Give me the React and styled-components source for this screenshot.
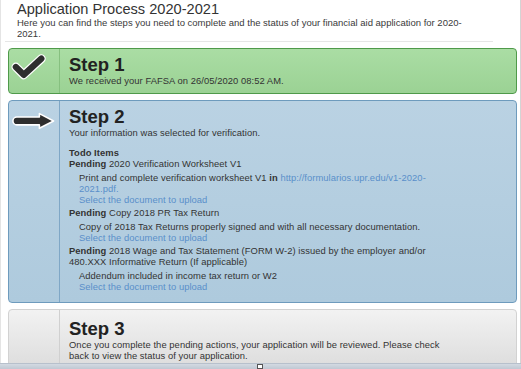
import React from "react";
import styled, { createGlobalStyle, css } from "styled-components";

const GlobalStyle = createGlobalStyle`
  html, body { margin: 0; padding: 0; background: #ffffff; }
  body {
    font-family: "Liberation Sans", Arial, sans-serif;
    color: #333333;
    overflow: hidden;
  }
`;

const Page = styled.div`
  height: 369px;
  box-sizing: border-box;
  padding: 0 3px 0 7px;
  border-left: 1px solid #e4e4e4;
  border-right: 1px solid #d4d4d4;
  overflow: hidden;
`;

const Header = styled.header`
  padding: 1px 50px 0 9px;
`;

const Title = styled.h1`
  margin: 0;
  font-size: 14.6px;
  font-weight: normal;
  line-height: 16px;
  color: #333;
`;

const Lead = styled.p`
  margin: 0;
  font-size: 9.5px;
  line-height: 11px;
  color: #3a3a3a;
`;

const Rule = styled.hr`
  border: 0;
  border-top: 1px solid #e6e6e6;
  margin: 2px 24px 6px -3px;
`;

const Steps = styled.div`
  display: flex;
  flex-direction: column;
  gap: 6px;
`;

const variants = {
  done: css`
    background: linear-gradient(#aadda4, #9bd294);
    border-color: #4f9a4a;
    --divider: #86c07f;
  `,
  active: css`
    background: linear-gradient(#bad2e3, #aecadd);
    border-color: #6e9bbd;
    --divider: #7fa7c6;
  `,
  pending: css`
    background: linear-gradient(#f2f2f2, #dadada);
    border-color: #d2d2d2;
    --divider: #d0d0d0;
  `,
};

const Panel = styled.section`
  display: grid;
  grid-template-columns: 51px 1fr;
  border: 1px solid;
  border-radius: 4px;
  ${(p) => variants[p.$variant]}
`;

const IconCell = styled.div`
  border-right: 1px solid var(--divider);
  display: flex;
  align-items: flex-start;
`;

const Body = styled.div`
  padding: ${(p) => p.$pad};
  font-size: 9.4px;
  letter-spacing: 0.06px;
  line-height: 11px;
  color: #333;
`;

const StepTitle = styled.h2`
  margin: 0;
  font-size: 18.5px;
  font-weight: bold;
  line-height: 21px;
  letter-spacing: 0;
  color: #222;
`;

const SectionLabel = styled.div`
  font-weight: bold;
  margin-top: 9px;
`;

const Req = styled.div`
  margin-top: ${(p) => p.$mt || 0}px;
`;

const Bold = styled.b`
  font-weight: bold;
`;

const Detail = styled.div`
  padding-left: 10px;
  margin-top: 3px;
`;

const Link = styled.a`
  color: #5a8fca;
  text-decoration: none;
`;

const BottomBar = styled.div`
  position: fixed;
  left: 0;
  right: 0;
  bottom: 0;
  height: 5px;
  background: linear-gradient(#d3dae2, #bfc8d3);
  border-top: 1px solid #b7c0cc;
`;

const Handle = styled.span`
  position: absolute;
  left: 257px;
  top: 0;
  width: 4px;
  height: 3px;
  border: 1px solid #555;
  background: #fff;
`;

const CheckIcon = () => (
  <svg width="51" height="36" viewBox="0 0 51 36">
    <path
      d="M7 18 L15 26 L33 9.5"
      fill="none"
      stroke="#ffffff"
      strokeWidth="9"
      strokeLinecap="round"
      strokeLinejoin="round"
    />
    <path
      d="M7 18 L15 26 L33 9.5"
      fill="none"
      stroke="#2e2e2e"
      strokeWidth="6.4"
      strokeLinecap="round"
      strokeLinejoin="round"
    />
  </svg>
);

const ArrowIcon = () => (
  <svg width="51" height="36" viewBox="0 0 51 36">
    <path
      d="M8 16 L31 16 L31 12.5 L45.5 20 L31 27.5 L31 24 L8 24 A4 4 0 0 1 8 16 Z"
      fill="#2e2e2e"
      stroke="#ffffff"
      strokeWidth="1.6"
      strokeLinejoin="round"
    />
  </svg>
);

export default function App() {
  return (
    <>
      <GlobalStyle />
      <Page>
        <Header>
          <Title>Application Process 2020-2021</Title>
          <Lead>
            Here you can find the steps you need to complete and the status of your
            financial aid application for 2020-
            <br />
            2021.
          </Lead>
        </Header>
        <Rule />
        <Steps>
          <Panel $variant="done">
            <IconCell>
              <CheckIcon />
            </IconCell>
            <Body $pad="5px 67px 7px 9px">
              <StepTitle>Step 1</StepTitle>
              <div>We received your FAFSA on 26/05/2020 08:52 AM.</div>
            </Body>
          </Panel>

          <Panel $variant="active">
            <IconCell>
              <ArrowIcon />
            </IconCell>
            <Body $pad="5px 67px 10px 9px">
              <StepTitle>Step 2</StepTitle>
              <div>Your information was selected for verification.</div>
              <SectionLabel>Todo Items</SectionLabel>
              <Req>
                <Bold>Pending</Bold> 2020 Verification Worksheet V1
              </Req>
              <Detail>
                Print and complete verification worksheet V1 <Bold>in</Bold>{" "}
                <Link href="#">
                  http://formularios.upr.edu/v1-2020-
                  <br />
                  2021.pdf.
                </Link>
                <br />
                <Link href="#">Select the document to upload</Link>
              </Detail>
              <Req $mt={2}>
                <Bold>Pending</Bold> Copy 2018 PR Tax Return
              </Req>
              <Detail>
                Copy of 2018 Tax Returns properly signed and with all necessary
                documentation.
                <br />
                <Link href="#">Select the document to upload</Link>
              </Detail>
              <Req $mt={2}>
                <Bold>Pending</Bold> 2018 Wage and Tax Statement (FORM W-2) issued by
                the employer and/or
                <br />
                480.XXX Informative Return (If applicable)
              </Req>
              <Detail>
                Addendum included in income tax return or W2
                <br />
                <Link href="#">Select the document to upload</Link>
              </Detail>
            </Body>
          </Panel>

          <Panel $variant="pending">
            <IconCell />
            <Body $pad="8px 67px 14px 9px">
              <StepTitle>Step 3</StepTitle>
              <div>
                Once you complete the pending actions, your application will be
                reviewed. Please check
                <br />
                back to view the status of your application.
              </div>
            </Body>
          </Panel>
        </Steps>
      </Page>
      <BottomBar>
        <Handle />
      </BottomBar>
    </>
  );
}
